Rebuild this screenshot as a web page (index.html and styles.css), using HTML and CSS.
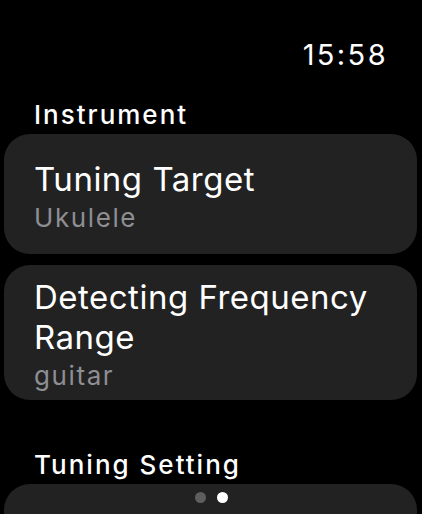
FILE: index.html
```html
<!DOCTYPE html>
<html>
<head>
<meta charset="utf-8">
<link rel="stylesheet" href="styles.css">
</head>
<body>
<div class="screen">
  <header class="status"><span class="time">15:58</span></header>
  <section class="group">
    <h2 class="label">Instrument</h2>
    <div class="cards">
      <div class="card">
        <div class="title">Tuning Target</div>
        <div class="value">Ukulele</div>
      </div>
      <div class="card">
        <div class="title">Detecting Frequency Range</div>
        <div class="value">guitar</div>
      </div>
    </div>
  </section>
  <section class="group second">
    <h2 class="label">Tuning Setting</h2>
    <div class="cards">
      <div class="card"></div>
    </div>
  </section>
  <div class="dots"><span class="dot"></span><span class="dot on"></span></div>
</div>
</body>
</html>
```
FILE: styles.css
```css
html, body { margin: 0; padding: 0; background: #000; }
body { width: 422px; height: 514px; overflow: hidden; font-family: Inter, "Noto Sans", sans-serif; color: #fff; }
.screen { position: relative; height: 514px; overflow: hidden; }
.status { display: flex; justify-content: flex-end; padding: 35px 34px 0 0; }
.time { font-size: 29px; line-height: 40px; font-weight: 400; letter-spacing: 2.4px; }
.group { display: flex; flex-direction: column; gap: 4px; padding: 0 5px 0 4px; margin-top: 25px; }
.second { margin-top: 50px; }
.label { margin: 0; padding-left: 30px; font-size: 26px; font-weight: 500; line-height: 30px; letter-spacing: 2px; }
.cards { display: flex; flex-direction: column; gap: 11px; }
.card { background: #222222; border-radius: 26px; padding: 12px 30px 6px 30px; min-height: 120px; box-sizing: border-box; display: flex; flex-direction: column; justify-content: center; }
.title { font-size: 33px; line-height: 40px; letter-spacing: 0.5px; }
.value { font-size: 26px; line-height: 37px; color: #8e8e93; letter-spacing: 1.6px; }
.dots { position: absolute; left: 0; right: 0; top: 492px; display: flex; justify-content: center; gap: 11px; }
.dot { width: 11px; height: 11px; border-radius: 50%; background: #5e5e5e; }
.dot.on { background: #fff; }
```
